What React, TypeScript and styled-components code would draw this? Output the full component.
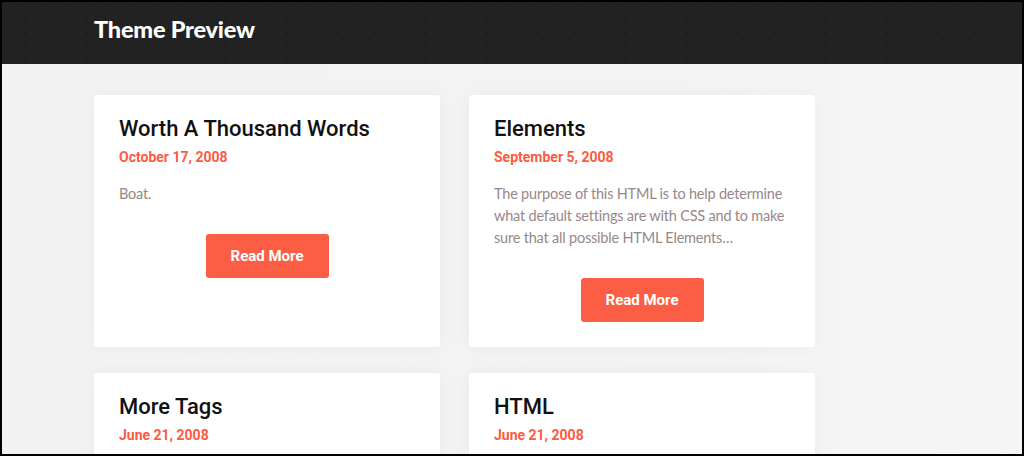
import React from 'react';
import styled, { createGlobalStyle } from 'styled-components';

const GlobalStyle = createGlobalStyle`
  html, body {
    margin: 0;
    padding: 0;
    background: #000;
  }
  * {
    box-sizing: border-box;
  }
`;

interface Post {
  title: string
  date: string
  excerpt?: string
}

const posts: Post[] = [
  { title: 'Worth A Thousand Words', date: 'October 17, 2008', excerpt: 'Boat.' },
  {
    title: 'Elements',
    date: 'September 5, 2008',
    excerpt:
      'The purpose of this HTML is to help determine what default settings are with CSS and to make sure that all possible HTML Elements…',
  },
  { title: 'More Tags', date: 'June 21, 2008' },
  { title: 'HTML', date: 'June 21, 2008' },
];

const App: React.FC = () => {
  return (
    <Frame>
      <GlobalStyle />
      <Header>
        <SiteTitle>Theme Preview</SiteTitle>
      </Header>
      <Main>
        <Grid>
          {posts.map((post, index) => (
            <Card key={index}>
              <Title>{post.title}</Title>
              <PostDate>{post.date}</PostDate>
              {post.excerpt && <Excerpt>{post.excerpt}</Excerpt>}
              {post.excerpt && (
                <Actions>
                  <ReadMore>Read More</ReadMore>
                </Actions>
              )}
            </Card>
          ))}
        </Grid>
      </Main>
    </Frame>
  );
};

const Frame = styled.div`
  width: 1024px;
  height: 456px;
  border: 2px solid #000;
  overflow: hidden;
  display: flex;
  flex-direction: column;
  background: #f4f4f4;
`;

const Header = styled.header`
  flex: 0 0 62px;
  padding: 13px 0 0 92px;
  background-color: #222222;
  background-image: radial-gradient(rgba(0, 0, 0, 0.85) 0.6px, transparent 0.9px);
  background-size: 12.5px 12.5px;
  background-position: 4px 0;
`;

const SiteTitle = styled.h1`
  margin: 0;
  font-family: Lato, 'Liberation Sans', sans-serif;
  font-weight: 900;
  font-size: 23.5px;
  line-height: 28px;
  color: #ffffff;
  letter-spacing: -0.2px;
`;

const Main = styled.main`
  flex: 1;
  padding: 31px 0 0 92px;
  background: linear-gradient(90deg, #f2f2f2 0%, #f3f3f3 70%, #f6f6f6 100%);
`;

const Grid = styled.div`
  display: grid;
  grid-template-columns: 346px 346px;
  column-gap: 29px;
  row-gap: 26px;
`;

const Card = styled.article`
  background: #ffffff;
  border-radius: 3px;
  padding: 20px 25px 25px;
  display: flex;
  flex-direction: column;
  box-shadow: 0 0 18px rgba(0, 0, 0, 0.035);
`;

const Title = styled.h2`
  margin: 0;
  font-family: Roboto, 'Liberation Sans', sans-serif;
  font-weight: 500;
  font-size: 22px;
  line-height: 28px;
  color: #111111;
`;

const PostDate = styled.div`
  margin-top: 4px;
  font-family: Roboto, 'Liberation Sans', sans-serif;
  font-weight: 700;
  font-size: 14px;
  line-height: 20px;
  color: #fc5a41;
`;

const Excerpt = styled.p`
  margin: 16px 0 0;
  font-family: Lato, 'Liberation Sans', sans-serif;
  font-size: 14.5px;
  letter-spacing: -0.2px;
  line-height: 22px;
  color: #978787;
`;

const Actions = styled.div`
  display: flex;
  justify-content: center;
  margin-top: 29px;
`;

const ReadMore = styled.button`
  width: 123px;
  height: 44px;
  border: none;
  border-radius: 3px;
  background: #fc5d45;
  color: #ffffff;
  font-family: Roboto, 'Liberation Sans', sans-serif;
  font-weight: 700;
  font-size: 15px;
  cursor: pointer;
`;

export default App;
